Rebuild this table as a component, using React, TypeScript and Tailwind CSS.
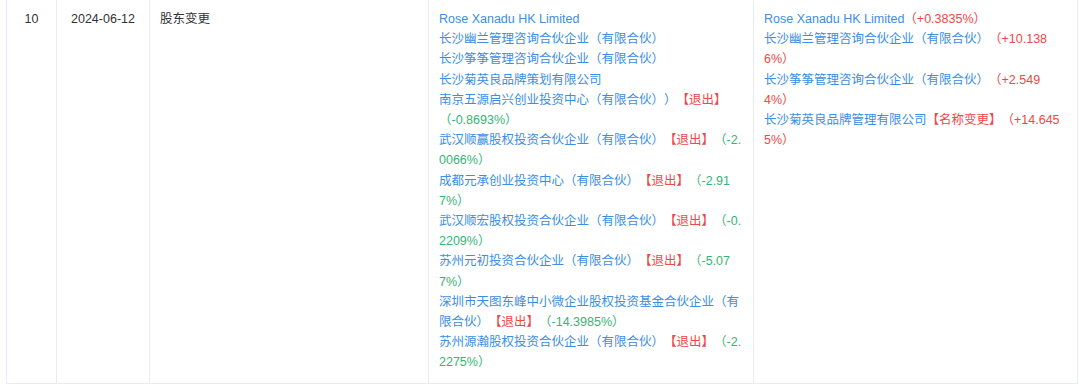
type Tone = 'b' | 'r' | 'g';
type Line = [Tone, string][];

const TONE: Record<Tone, string> = {
  b: 'text-[#3b8ee6]',
  r: 'text-[#f04747]',
  g: 'text-[#35b575]',
};

// each entry is one visual line, wrapped the way the source table wraps them
const BEFORE: Line[] = [
  [['b', 'Rose Xanadu HK Limited']],
  [['b', '长沙幽兰管理咨询合伙企业（有限合伙）']],
  [['b', '长沙筝筝管理咨询合伙企业（有限合伙）']],
  [['b', '长沙菊英良品牌策划有限公司']],
  [['b', '南京五源启兴创业投资中心（有限合伙））'], ['r', '【退出】']],
  [['g', '（-0.8693%）']],
  [['b', '武汉顺赢股权投资合伙企业（有限合伙）'], ['r', '【退出】'], ['g', '（-2.']],
  [['g', '0066%）']],
  [['b', '成都元承创业投资中心（有限合伙）'], ['r', '【退出】'], ['g', '（-2.91']],
  [['g', '7%）']],
  [['b', '武汉顺宏股权投资合伙企业（有限合伙）'], ['r', '【退出】'], ['g', '（-0.']],
  [['g', '2209%）']],
  [['b', '苏州元初投资合伙企业（有限合伙）'], ['r', '【退出】'], ['g', '（-5.07']],
  [['g', '7%）']],
  [['b', '深圳市天图东峰中小微企业股权投资基金合伙企业（有']],
  [['b', '限合伙）'], ['r', '【退出】'], ['g', '（-14.3985%）']],
  [['b', '苏州源瀚股权投资合伙企业（有限合伙）'], ['r', '【退出】'], ['g', '（-2.']],
  [['g', '2275%）']],
];

const AFTER: Line[] = [
  [['b', 'Rose Xanadu HK Limited'], ['r', '（+0.3835%）']],
  [['b', '长沙幽兰管理咨询合伙企业（有限合伙）'], ['r', '（+10.138']],
  [['r', '6%）']],
  [['b', '长沙筝筝管理咨询合伙企业（有限合伙）'], ['r', '（+2.549']],
  [['r', '4%）']],
  [['b', '长沙菊英良品牌管理有限公司'], ['r', '【名称变更】'], ['r', '（+14.645']],
  [['r', '5%）']],
];

const cell = 'border-l border-[#e6edf5] pt-[9px] pb-[10px] px-[10px]';

function Lines({ lines }: { lines: Line[] }) {
  return (
    <>
      {lines.map((line, i) => (
        <div key={i} className="whitespace-nowrap">
          {line.map(([tone, text], j) => (
            <span key={j} className={TONE[tone]}>
              {text}
            </span>
          ))}
        </div>
      ))}
    </>
  );
}

export default function App() {
  return (
    <div
      className="h-[385px] w-[1080px] bg-white text-[12.5px] leading-[20.2px] text-[#333] [text-spacing-trim:space-all]"
      style={{ fontFamily: '"Liberation Sans", "Noto Sans CJK SC", sans-serif' }}
    >
      <div className="ml-[6px] grid w-[1072px] grid-cols-[50px_93px_279px_325px_325px] border-b border-[#e6edf5]">
        <div className={`${cell} text-center`}>10</div>
        <div className={`${cell} text-center`}>2024-06-12</div>
        <div className={cell}>股东变更</div>
        <div className={cell}>
          <Lines lines={BEFORE} />
        </div>
        <div className={`${cell} border-r`}>
          <Lines lines={AFTER} />
        </div>
      </div>
    </div>
  );
}
